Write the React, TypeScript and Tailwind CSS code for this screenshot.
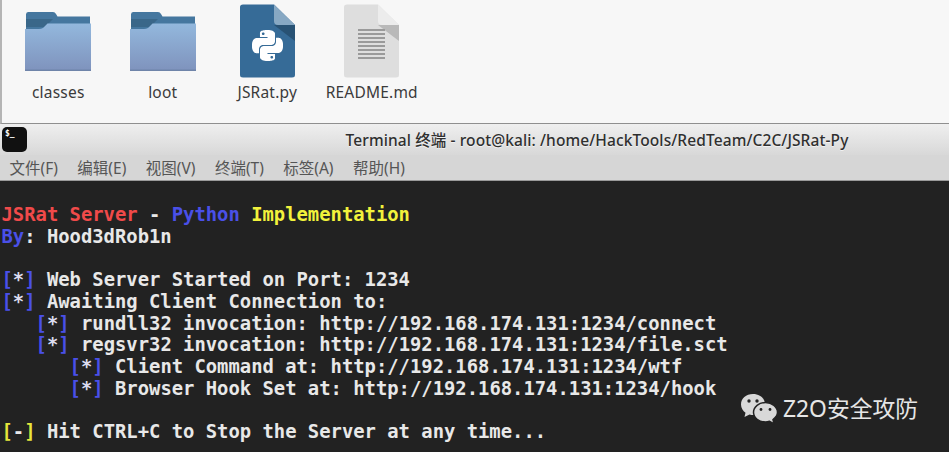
import { SiPython } from 'react-icons/si';

const Folder = () => (
  <svg width="66" height="60" viewBox="0 0 66 60" className="block">
    <defs>
      <linearGradient id="folderFront" x1="0" y1="0" x2="0" y2="1">
        <stop offset="0" stopColor="#93b8dd" />
        <stop offset="1" stopColor="#7f93bd" />
      </linearGradient>
    </defs>
    <path d="M1 3.500Q1 1 3 1H28Q30 1 31 3L32.500 5.500H65V20H1Z" fill="#45779f" />
    <path d="M1 8H28L20 16H1Z" fill="#3a6789" />
    <path d="M0 20V59.500H66V12.500H22.500L18 17Q16 18 14 18H0Z" fill="url(#folderFront)" />
    <rect x="0" y="58.500" width="66" height="1.500" fill="#6f84a9" />
  </svg>
);

const PythonFile = () => (
  <div className="relative h-[74px] w-[55px]">
    <svg width="55" height="74" viewBox="0 0 55 74" className="block">
      <path d="M3 0.500H34L55 21V71Q55 73.500 52 73.500H3Q0 73.500 0 71V3Q0 0.500 3 0.500Z" fill="#366b97" />
      <path d="M34 0.500L55 21H38Q34 21 34 17Z" fill="#87a8c3" />
      <path d="M34 21H55V37Z" fill="#285274" />
    </svg>
    <SiPython className="absolute left-[12px] top-[26px] text-white" size={31} />
  </div>
);

const TextFile = () => (
  <svg width="55" height="74" viewBox="0 0 55 74" className="block">
    <path d="M3 0.500H34L55 21V71Q55 73.500 52 73.500H3Q0 73.500 0 71V3Q0 0.500 3 0.500Z" fill="#dedede" />
    <path d="M34 0.500L55 21H38Q34 21 34 17Z" fill="#ececec" />
    <path d="M34 21H55V37Z" fill="#b9b9b9" />
    <g fill="#9a9a9a">
      <rect x="14" y="25" width="27" height="2" />
      <rect x="14" y="29" width="27" height="2" />
      <rect x="14" y="33" width="27" height="2" />
      <rect x="14" y="37" width="27" height="2" />
      <rect x="14" y="41" width="27" height="2" />
      <rect x="14" y="45" width="27" height="2" />
      <rect x="14" y="49" width="27" height="2" />
      <rect x="14" y="53" width="27" height="2" />
    </g>
  </svg>
);

const FileItem = ({ label, icon, pad }: { label: string; icon: React.ReactNode; pad: string }) => (
  <div className="flex w-[104.500px] flex-col items-center">
    <div className={`flex h-[78px] items-start ${pad}`}>{icon}</div>
    <div className="text-[15.500px] leading-5 tracking-[0.2px] text-[#3b3b3b]">{label}</div>
  </div>
);

const WeChat = () => (
  <svg width="38" height="32" viewBox="0 0 38 32" className="block">
    <path d="M13 1C6 1 1 5.500 1 11.500C1 15 3 18 5.500 19.800L4.500 24L9.500 21.500C11 22 12 22.100 13.500 22.100C20 22.100 25 17.500 25 11.500C25 5.500 20 1 13 1Z" fill="#d8d8d8" />
    <path d="M25.500 9.500C19 9.500 13.500 13.800 13.500 19.300C13.500 24.800 19 29 25.500 29C27 29 28 28.800 29.500 28.300L34 31L33 26.500C35.700 24.500 37.500 22 37.500 19.300C37.500 13.800 32 9.500 25.500 9.500Z" fill="#d8d8d8" stroke="#222222" strokeWidth="1.500" />
    <circle cx="9" cy="8" r="1.700" fill="#222222" />
    <circle cx="17" cy="8" r="1.700" fill="#222222" />
    <circle cx="21" cy="16.500" r="1.400" fill="#222222" />
    <circle cx="30" cy="16.500" r="1.400" fill="#222222" />
  </svg>
);

const Blue = ({ children }: { children: string }) => <span className="text-[#4a50e8]">{children}</span>;

const Star = () => (
  <>
    <Blue>[</Blue>
    <span className="text-[#dcdcf0]">*</span>
    <Blue>]</Blue>
  </>
);

const App = () => {
  const menu = ['文件(F)', '编辑(E)', '视图(V)', '终端(T)', '标签(A)', '帮助(H)'];

  return (
    <div className="relative h-[452px] w-[949px] overflow-hidden bg-[#222222] font-['Noto_Sans','Noto_Sans_CJK_SC',sans-serif]">
      <div className="flex h-[124px] border-b border-l-2 border-b-[#8f8f8f] border-l-[#b5b5b5] bg-[#f7f7f7] pl-[4px] pt-[4px]">
        <FileItem label="classes" icon={<Folder />} pad="pt-[7px]" />
        <FileItem label="loot" icon={<Folder />} pad="pt-[7px]" />
        <FileItem label="JSRat.py" icon={<PythonFile />} pad="" />
        <FileItem label="README.md" icon={<TextFile />} pad="" />
      </div>

      <div className="relative flex h-[31px] items-center justify-center bg-gradient-to-b from-[#efefef] to-[#d8d8d8] pl-[245px]">
        <div className="absolute left-[2px] top-[3px] h-[25px] w-[25px] rounded-[5px] bg-[#111111] pl-[3px] font-['DejaVu_Sans_Mono',monospace] text-[8px] font-bold leading-[14px] text-white">
          $_
        </div>
        <div className="text-[15.500px] font-medium leading-5 tracking-[0.1px] text-[#2f2f2f] [text-shadow:0_1px_0_#ffffff99]">
          Terminal 终端 - root@kali: /home/HackTools/RedTeam/C2C/JSRat-Py
        </div>
      </div>

      <div className="flex h-[25.500px] items-center gap-[19.500px] border-b border-b-[#9a9a9a] bg-[#d6d6d6] pl-[9.500px] pt-[1.500px] text-[15.500px] leading-5 text-[#555555]">
        {menu.map((item) => (
          <span key={item}>{item}</span>
        ))}
      </div>

      <pre className="bg-[#222222] pl-[1.500px] pt-[2px] font-['DejaVu_Sans_Mono',monospace] text-[18.850px] font-bold leading-[21.670px] text-[#e8e8e8]">
        {'\n'}
        <span className="text-[#f04a4a]">JSRat Server</span> - <Blue>Python</Blue>{' '}
        <span className="text-[#f2f23c]">Implementation</span>
        {'\n'}
        <Blue>By</Blue>: Hood3dRob1n
        {'\n\n'}
        <Star /> Web Server Started on Port: 1234
        {'\n'}
        <Star /> Awaiting Client Connection to:
        {'\n   '}
        <Star /> rundll32 invocation: http://192.168.174.131:1234/connect
        {'\n   '}
        <Star /> regsvr32 invocation: http://192.168.174.131:1234/file.sct
        {'\n      '}
        <Star /> Client Command at: http://192.168.174.131:1234/wtf
        {'\n      '}
        <Star /> Browser Hook Set at: http://192.168.174.131:1234/hook
        {'\n\n'}
        <span className="text-[#e6e63c]">[</span>-<span className="text-[#e6e63c]">]</span> Hit CTRL+C to Stop the Server at any time...
      </pre>

      <div className="absolute left-[740px] top-[393px] flex items-center gap-[5px]">
        <WeChat />
        <span className="text-[22.800px] leading-[32px] text-[#e6e6e6]">Z2O安全攻防</span>
      </div>
    </div>
  );
};

export default App;
